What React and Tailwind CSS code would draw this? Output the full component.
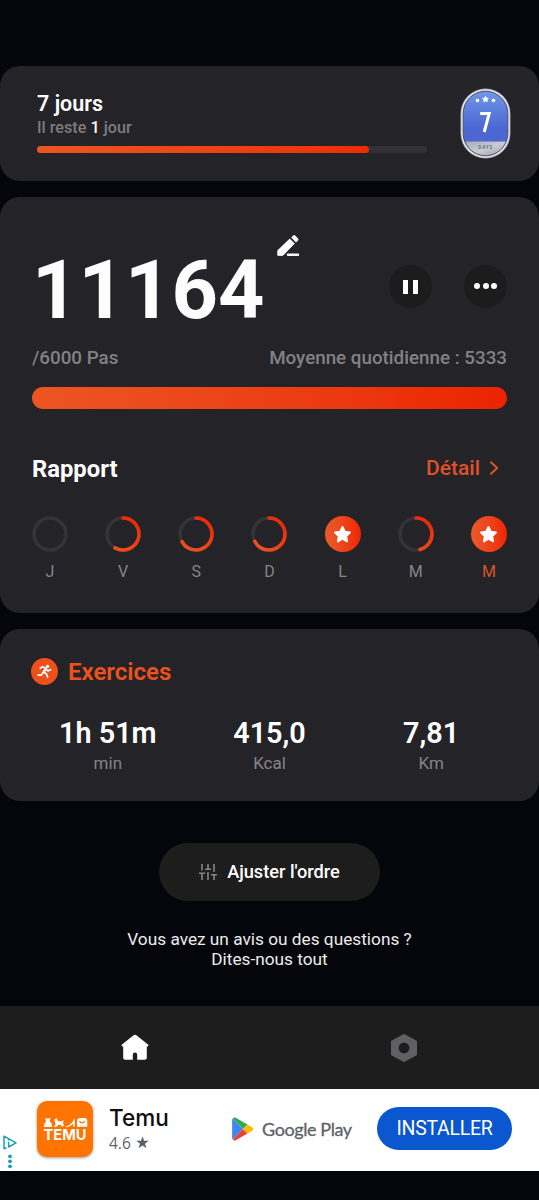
import React from 'react';

const days = [
  { label: 'J', progress: 0 },
  { label: 'V', progress: 0.58 },
  { label: 'S', progress: 0.665 },
  { label: 'D', progress: 0.67 },
  { label: 'L', done: true },
  { label: 'M', progress: 0.455 },
  { label: 'M', done: true, today: true },
];

const exercises = [
  { value: '1h 51m', unit: 'min' },
  { value: '415,0', unit: 'Kcal' },
  { value: '7,81', unit: 'Km' },
];

const Star = ({ className }) => (
  <svg viewBox="0 0 24 24" className={className} fill="currentColor" stroke="currentColor" strokeWidth="2.6" strokeLinejoin="round">
    <path d="M12 2.6l2.8 6 6.6.9-4.9 4.6 1.3 6.5-5.8-3.3-5.800 3.300 1.300-6.500-4.900-4.600 6.600-.9z" />
  </svg>
);

const Badge = () => (
  <svg width="51" height="71" viewBox="0 0 51 71">
    <defs>
      <linearGradient id="badgeBlue" x1="0" y1="0" x2="0" y2="1">
        <stop offset="0" stopColor="#6f97e8" />
        <stop offset="0.75" stopColor="#4c66d2" />
      </linearGradient>
      <linearGradient id="badgeSilver" x1="0" y1="0" x2="1" y2="1">
        <stop offset="0" stopColor="#a4a9b4" />
        <stop offset="0.5" stopColor="#c9ccd3" />
        <stop offset="1" stopColor="#8f949f" />
      </linearGradient>
      <clipPath id="badgeClip">
        <rect x="3.2" y="3.2" width="44.6" height="64.6" rx="22.3" />
      </clipPath>
    </defs>
    <rect x="0.8" y="0.8" width="49.4" height="69.4" rx="24.7" fill="#e3e5ea" stroke="#8d9097" strokeWidth="0.6" />
    <g clipPath="url(#badgeClip)">
      <rect x="3" y="3" width="45" height="51" fill="url(#badgeBlue)" />
      <rect x="3" y="53.5" width="45" height="15" fill="url(#badgeSilver)" />
    </g>
    <rect x="3.2" y="3.2" width="44.6" height="64.6" rx="22.3" fill="none" stroke="#4a5068" strokeWidth="1" />
    <path d="M25.5 8.3l.9 1.8 2 .3-1.4 1.4.3 2-1.8-1-1.8 1 .3-2-1.4-1.4 2-.3z" fill="#fff" stroke="#fff" strokeWidth="0.8" />
    <circle cx="17.5" cy="12.5" r="1.8" fill="#fff" />
    <circle cx="33.5" cy="12.5" r="1.8" fill="#fff" />
    <path d="M20.2 25.4H29.2L24.2 44" fill="none" stroke="#fff" strokeWidth="3" />
    <text x="25.7" y="61.2" textAnchor="middle" fontFamily="Roboto, sans-serif" fontSize="4.8" fontWeight="700" letterSpacing="0.7" fill="#6d717b">DAYS</text>
  </svg>
);

const Ring = ({ progress }) => {
  const length = 2 * Math.PI * 16;
  return (
    <svg width="36" height="36" viewBox="0 0 36 36">
      <defs>
        <linearGradient id="ring" x1="0" y1="1" x2="0.6" y2="0">
          <stop offset="0" stopColor="#ec5521" />
          <stop offset="1" stopColor="#ec2b08" />
        </linearGradient>
      </defs>
      <circle cx="18" cy="18" r="16" fill="none" stroke="#343438" strokeWidth="3.6" />
      {progress > 0 && (
        <path
          d="M18 2a16 16 0 0 1 0 32a16 16 0 0 1 0-32"
          fill="none"
          stroke="url(#ring)"
          strokeWidth="3.6"
          strokeLinecap="round"
          strokeDasharray={`${length * progress} ${length}`}
        />
      )}
    </svg>
  );
};

const Day = ({ label, progress, done, today }) => (
  <div className="flex w-9 flex-col items-center">
    {done ? (
      <div className="flex size-9 items-center justify-center rounded-full bg-linear-to-r from-[#ea5a2a] to-[#ef2200]">
        <Star className="size-[19px] text-white" />
      </div>
    ) : (
      <Ring progress={progress} />
    )}
    <span className={`mt-[10px] text-base leading-5 ${today ? 'text-[#d9532b]' : 'text-[#858588]'}`}>{label}</span>
  </div>
);

const StreakCard = () => (
  <section className="flex h-[115px] items-start justify-between rounded-[20px] bg-[#242327] pr-7 pl-[37px]">
    <div className="w-[390px] pt-[25px]">
      <h2 className="text-[21.5px] leading-[26px] font-semibold text-white">7 jours</h2>
      <p className="mt-[-1px] text-[16.2px] leading-6 font-medium text-[#7c7c7f]">
        Il reste <span className="text-white">1</span> jour
      </p>
      <div className="mt-[6px] h-[7px] rounded-full bg-[#323236]">
        <div className="h-full w-[85%] rounded-full bg-linear-to-r from-[#ec5521] to-[#ee2c04]" />
      </div>
    </div>
    <div className="pt-[22px]">
      <Badge />
    </div>
  </section>
);

const StepsCard = () => (
  <section className="mt-4 h-[416px] rounded-[20px] bg-[#242327] px-8 pt-[35px]">
    <div className="flex h-[113px] items-center">
      <span className="mt-[3px] text-[81px] leading-none font-bold text-[#fdfdfd]">11164</span>
      <svg className="mt-[2px] ml-[13px] self-start" width="23" height="23" viewBox="0 0 23 23" fill="#fff">
        <path d="M.8 21.3V16.6L12.7 5.1 17.2 9.6 6 21.3z" stroke="#fff" strokeWidth="1" strokeLinejoin="round" />
        <path d="M14.2 3.6l2-2a1.4 1.4 0 0 1 2 0l2.8 2.8a1.4 1.4 0 0 1 0 2l-2 2z" />
        <rect x="9.8" y="19.5" width="12.4" height="2.5" rx="1.2" />
      </svg>
      <div className="mb-[5px] ml-auto flex gap-8">
        <button className="flex size-[43px] items-center justify-center gap-[5px] rounded-full bg-[#1c1c1d]">
          <span className="mt-[2px] h-[14px] w-[5px] bg-white" />
          <span className="mt-[2px] h-[14px] w-[5px] bg-white" />
        </button>
        <button className="flex size-[43px] items-center justify-center gap-[2.5px] rounded-full bg-[#1c1c1d]">
          <span className="size-[6px] rounded-full bg-white" />
          <span className="size-[6px] rounded-full bg-white" />
          <span className="size-[6px] rounded-full bg-white" />
        </button>
      </div>
    </div>
    <div className="flex justify-between text-[18.8px] leading-[26px] font-medium text-[#828285]">
      <span>/6000 Pas</span>
      <span>Moyenne quotidienne : 5333</span>
    </div>
    <div className="mt-4 h-[22px] rounded-full bg-linear-to-r from-[#ec5521] to-[#ec2200]" />

    <div className="mt-11 flex items-center justify-between">
      <h2 className="mt-[2px] text-[23.8px] leading-7 font-bold text-white">Rapport</h2>
      <span className="flex items-center gap-[9px] pr-2 text-[21px] leading-7 font-medium text-[#df5228]">
        Détail
        <svg width="10" height="14" viewBox="0 0 10 14" fill="none" stroke="currentColor" strokeWidth="2" strokeLinecap="round" strokeLinejoin="round">
          <path d="M2 1.2L8.2 7 2 12.8" />
        </svg>
      </span>
    </div>
    <div className="mt-[33px] flex justify-between">
      {days.map((day, i) => (
        <Day key={i} {...day} />
      ))}
    </div>
  </section>
);

const ExercisesCard = () => (
  <section className="mt-4 h-[172px] rounded-[20px] bg-[#242327] px-[27px] pt-7">
    <div className="flex h-7 items-center gap-[10px] pl-1">
      <svg width="27" height="27" viewBox="0 0 27 27">
        <circle cx="13.5" cy="13.5" r="13.5" fill="#ee501c" />
        <circle cx="16.6" cy="8.5" r="1.7" fill="#fff" />
        <path d="M9.2 10.3l2.3-1.6 3.2 1.5-2.3 3.6 3.1 2.2 1.2 3.3M12.1 14.3l-1.7 2.8H7.2M15 11.2l1.9 1.7 2.6-1.2" fill="none" stroke="#fff" strokeWidth="1.7" strokeLinecap="round" strokeLinejoin="round" />
        <path d="M14.5 9.9l-2.6 4.2 1.5 1 2.6-4z" fill="#fff" />
      </svg>
      <h2 className="mt-[2px] text-[24px] leading-7 font-semibold text-[#ee511d]">Exercices</h2>
    </div>
    <div className="mt-8 grid grid-cols-3 text-center">
      {exercises.map((item) => (
        <div key={item.unit}>
          <p className="text-[28.8px] leading-8 font-semibold text-white">{item.value}</p>
          <p className="mt-1 text-[17px] leading-5 text-[#858588]">{item.unit}</p>
        </div>
      ))}
    </div>
  </section>
);

const AdBanner = () => (
  <aside className="flex h-[82px] items-center bg-white pb-[3px]">
    <div className="flex w-[37px] shrink-0 flex-col pt-[49px] pl-[3px]">
      <svg width="15" height="37" viewBox="0 0 15 37" fill="none" stroke="#18a0b8" strokeWidth="1.5" strokeLinejoin="round">
        <path d="M1 14V1.2L13 7.800 5.600 12V6.800" />
        <path d="M5.600 4v1.500M1 14l2.600-1.400" />
        <g fill="#18a0b8" stroke="none">
          <circle cx="7" cy="21.300" r="1.900" />
          <circle cx="7" cy="26.300" r="1.900" />
          <circle cx="7" cy="31.300" r="1.900" />
        </g>
      </svg>
    </div>
    <div className="size-14 shrink-0 rounded-[10px] bg-[#ff7300] shadow-[0_1px_3px_rgba(0,0,0,0.4)]">
      <svg width="56" height="56" viewBox="0 0 56 56" fill="#fff">
        <path d="M8 16.500l1.500 1h2.300l1.500-1-.4 4c1.800 1.500 2.300 3.200 2.200 5.500H7c0-2.300.5-4 2-5.500z" />
        <path d="M17.300 18.500l2.200-1.500 1.600 3.200h3.800l1.700-1.200-.6 3.500 1.200 1.500-1.800 2-1.600-2h-2.600l-2 2h-2.300l1.700-2.800z" />
        <path d="M28.500 25.200c4-.4 7.500-3.600 8.700-8 1 2.600.9 5.300.2 8.600h-1.200l-.2-3.300c-1.700 2.500-4.200 3.500-7.500 3.300z" />
        <path d="M42.500 17h5a3 3 0 0 1 2.800 3v5.800H40V20a3 3 0 0 1 2.500-3z" />
        <path d="M42.500 20c1 2.400 4.200 2.400 5.200 0" fill="none" stroke="#ff7300" strokeWidth="1.200" />
        <text x="28" y="39.300" textAnchor="middle" textLength="43" lengthAdjust="spacingAndGlyphs" fontFamily="Inter, sans-serif" fontSize="14.500" fontWeight="700">TEMU</text>
      </svg>
    </div>
    <div className="ml-4 w-[123px] shrink-0">
      <p className="mt-[2px] font-['Inter',sans-serif] text-[22.5px] leading-[26px] font-medium text-[#0e0e0e]">Temu</p>
      <p className="flex items-center gap-[5px] font-['Open_Sans',sans-serif] text-[15.500px] leading-6 text-[#5f6368]">
        4.6
        <svg width="13" height="13" viewBox="0 0 24 24" fill="#5f6368">
          <path d="M12 .8l3 8h8.500l-6.800 5.300 2.500 8.500-7.200-5-7.200 5 2.500-8.500L.5 8.800H9z" />
        </svg>
      </p>
    </div>
    <div className="flex w-[145px] shrink-0 items-center gap-2">
      <svg width="22" height="24" viewBox="0 0 22 24">
        <path d="M.8 1.500L11 12 .8 22.500C.3 22 .1 21.500.1 21V3c0-.5.2-1 .7-1.500z" fill="#4285f4" />
        <path d="M.8 1.500C1.500.4 2.600.2 3.700.8L15.500 7.500 11 12z" fill="#34a853" />
        <path d="M.8 22.500c.7 1.100 1.800 1.300 2.900.7L15.500 16.500 11 12z" fill="#ea4335" />
        <path d="M15.500 7.500l4.700 2.700c1.500.9 1.500 2.700 0 3.600l-4.700 2.700L11 12z" fill="#fbbc04" />
      </svg>
      <span className="font-['Lato',sans-serif] text-[18px] leading-6 tracking-[-0.4px] whitespace-nowrap text-[#5f6368] [-webkit-text-stroke:0.3px_#5f6368]">Google Play</span>
    </div>
    <button className="flex h-[43px] w-[135px] shrink-0 items-center justify-center rounded-full bg-[#0b57d0] text-[19.500px] leading-6 tracking-[-0.3px] text-white">
      INSTALLER
    </button>
  </aside>
);

export default function App() {
  return (
    <div className="flex h-[1200px] w-[539px] flex-col bg-[#05060b] pt-[66px] font-['Roboto',sans-serif]">
      <StreakCard />
      <StepsCard />
      <ExercisesCard />

      <div className="flex flex-1 flex-col items-center pt-[42px]">
        <button className="flex h-[58px] w-[221px] items-center justify-center gap-[10px] rounded-full bg-[#1d1d1e] text-[18.2px] font-medium text-white">
          <svg width="18" height="16" viewBox="0 0 18 16" fill="none" stroke="#858587" strokeWidth="1.6">
            <path d="M3 0v6.5M0 9.3h6M3 9.3V16M9 0v5M6 5.3h6M9 8v8M15 0v8M12 10.8h6M15 10.8V16" />
          </svg>
          Ajuster l'ordre
        </button>
        <p className="mt-7 text-center text-[17.25px] leading-5 text-[#ececed]">
          Vous avez un avis ou des questions ?
          <br />
          Dites-nous tout
        </p>
      </div>

      {/* Bottom navigation */}
      <nav className="grid h-[83px] grid-cols-2 items-center justify-items-center bg-[#1d1d1e]">
        <svg width="28" height="27" viewBox="0 0 28 27" fill="#fff">
          <path d="M12.3 1.5a2.6 2.6 0 0 1 3.4 0L27 10.6c.8.7.4 1.9-.7 1.9h-.5v11.300a2 2 0 0 1-2 2H16.200v-5a2.200 2.200 0 0 0-4.400 0v5H4.200a2 2 0 0 1-2-2V12.500h-.5C.6 12.500.2 11.300 1 10.600z" />
        </svg>
        <svg width="28" height="30" viewBox="0 0 28 30">
          <path d="M14 2.500L25.500 8.800V21.200L14 27.500 2.500 21.200V8.800z" fill="#606062" stroke="#606062" strokeWidth="3" strokeLinejoin="round" />
          <circle cx="14" cy="15" r="5.400" fill="#1d1d1e" />
        </svg>
      </nav>
      <AdBanner />
      <div className="h-[29px] shrink-0" />
    </div>
  );
}
